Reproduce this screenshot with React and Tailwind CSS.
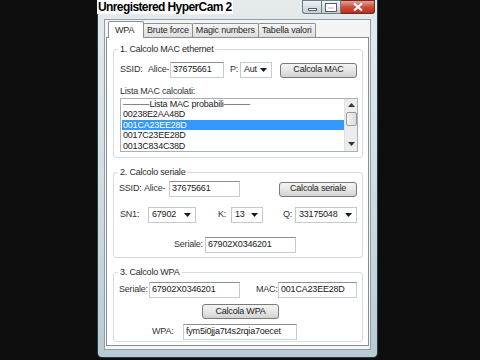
import React from "react";

const TextBox = ({ w, children }) => (
    <div
        className={`${w} h-[16px] bg-white border border-[#c5cdd4] border-t-[#8d9197] flex items-center px-[2px] text-[#202020] whitespace-nowrap overflow-hidden`}
    >
        {children}
    </div>
);

const Combo = ({ w, children }) => (
    <div
        className={`${w} h-[16px] bg-white border border-[#c2c9d0] flex items-center pl-[3px] pr-[4px] text-[#202020] whitespace-nowrap overflow-hidden`}
    >
        <span className="flex-1">{children}</span>
        <svg width="7" height="4" viewBox="0 0 7 4" className="shrink-0 ml-[2px]">
            <path d="M0 0 L7 0 L3.5 4 Z" fill="#1a1a1a" />
        </svg>
    </div>
);

const Button = ({ w, children }) => (
    <div
        className={`${w} h-[15px] rounded-[3px] border border-[#7a7a7a] bg-gradient-to-b from-[#f4f4f4] via-[#e6e6e6] to-[#d2d2d2] flex items-center justify-center text-[#1c1c1c] whitespace-nowrap`}
    >
        {children}
    </div>
);

const Group = ({ title, className, children }) => (
    <fieldset className={`border border-[#d5dde3] rounded-[3px] mx-0 ${className}`}>
        <legend className="ml-[4px] px-[2px] leading-[10px] text-[#2a2a2a]">{title}</legend>
        {children}
    </fieldset>
);

const Tab = ({ label, active }) =>
    active ? (
        <div className="w-[36px] h-[17px] -mb-px bg-white border border-b-0 border-[#8c8e94] rounded-t-[2px] pl-[6px] pt-[2px] text-[#2a2a2a] relative z-10">
            {label}
        </div>
    ) : (
        <div className="h-[14px] -ml-px first:ml-0 border border-b-0 border-[#8e9096] rounded-t-[2px] bg-gradient-to-b from-[#f5f5f5] to-[#dedede] px-[3px] leading-[13px] text-[#2a2a2a] whitespace-nowrap">
            {label}
        </div>
    );

const macs = [
    "———Lista MAC probabili———",
    "00238E2AA48D",
    "001CA23EE28D",
    "0017C23EE28D",
    "0013C834C38D",
];

export default function App() {
    return (
        <div
            className="w-[480px] h-[360px] bg-[#0e0e0e] flex overflow-hidden text-[9px] tracking-[-0.2px]"
            style={{ fontFamily: '"Liberation Sans", Arial, sans-serif' }}
        >
            <div className="ml-[97px] w-[281px] h-[358px] flex flex-col border border-t-0 border-[#1f3f49] rounded-b-[5px] bg-gradient-to-b from-[#e6eaed] via-[#d3dde2] to-[#b9cbd2]">
                {/* title bar */}
                <div className="h-[19px] flex items-start justify-between shrink-0">
                    <div className="-ml-px bg-white px-[1px] h-[14px] leading-[14px] text-[12px] font-bold text-black whitespace-nowrap tracking-[-0.6px]">
                        Unregistered HyperCam 2
                    </div>
                    <div className="flex mr-[2px]">
                        <div className="w-[19px] h-[14px] border border-[#6d7d86] border-r-0 rounded-bl-[3px] bg-gradient-to-b from-[#f0f3f5] to-[#c3ced4] flex items-center justify-center">
                            <div className="w-[9px] h-[3px] mt-[5px] bg-white border border-[#55606a]" />
                        </div>
                        <div className="w-[20px] h-[14px] border border-[#6d7d86] bg-gradient-to-b from-[#f0f3f5] to-[#c3ced4] flex items-center justify-center">
                            <div className="w-[10px] h-[7px] border-[2px] border-t-[3px] border-[#ffffff] outline outline-1 outline-[#55606a]" />
                        </div>
                        <div className="w-[34px] h-[14px] border border-[#6b2a22] border-l-0 rounded-br-[3px] bg-gradient-to-b from-[#e3a196] via-[#cc4b3a] to-[#b8301e] flex items-center justify-center">
                            <svg width="10" height="8" viewBox="0 0 10 8">
                                <path d="M1 0.5 L9 7.5 M9 0.5 L1 7.5" stroke="#ffffff" strokeWidth="2.2" />
                            </svg>
                        </div>
                    </div>
                </div>

                {/* client */}
                <div className="mx-[6px] mb-[7px] flex-1 bg-[#f4f4f4] border border-[#8aa0aa] flex flex-col pt-[1px] pl-[1px] pr-[1px] pb-[3px]">
                    <div className="flex items-end h-[16px] pl-[2px] shrink-0">
                        <Tab label="WPA" active />
                        <div className="flex items-end -ml-px">
                            <Tab label="Brute force" />
                            <Tab label="Magic numbers" />
                            <Tab label="Tabella valori" />
                        </div>
                    </div>
                    <div className="flex-1 bg-white border border-[#898c95] pl-[6px] pr-[5px] pt-[6px] flex flex-col">
                        <Group title="1. Calcolo MAC ethernet" className="h-[114px] pb-[3px]">
                            <div className="flex items-center mt-[8px] pl-[6px] text-[#333]">
                                <span className="w-[28px]">SSID:</span>
                                <span className="w-[22px]">Alice-</span>
                                <TextBox w="w-[54px]">37675661</TextBox>
                                <span className="ml-[6px] w-[10px]">P:</span>
                                <Combo w="w-[32px]">Aut</Combo>
                                <div className="ml-[8px]">
                                    <Button w="w-[77px]">Calcola MAC</Button>
                                </div>
                            </div>
                            <div className="mt-[8px] pl-[6px] leading-[10px] text-[#333]">Lista MAC calcolati:</div>
                            <div className="mt-[2px] ml-[6px] w-[238px] h-[54px] border border-[#a9b0b7] bg-white flex">
                                <div className="flex-1 pl-[1px] text-[#222]">
                                    {macs.map((m, i) => (
                                        <div
                                            key={m}
                                            className={`h-[10.4px] leading-[10.4px] pl-[1px] whitespace-nowrap ${i === 2 ? "bg-[#3399ff] text-white" : ""}`}
                                        >
                                            {m}
                                        </div>
                                    ))}
                                </div>
                                <div className="w-[13px] bg-[#ececec] border-l border-[#e0e0e0] flex flex-col items-center">
                                    <svg width="7" height="4" viewBox="0 0 7 4" className="mt-[4px]">
                                        <path d="M0 4 L7 4 L3.5 0 Z" fill="#333" />
                                    </svg>
                                    <div className="mt-[5px] w-[11px] h-[14px] rounded-[2px] border border-[#9a9a9a] bg-gradient-to-r from-[#f2f2f2] to-[#dcdcdc]" />
                                    <div className="flex-1" />
                                    <svg width="7" height="4" viewBox="0 0 7 4" className="mb-[5px]">
                                        <path d="M0 0 L7 0 L3.5 4 Z" fill="#333" />
                                    </svg>
                                </div>
                            </div>
                        </Group>

                        <Group title="2. Calcolo seriale" className="mt-[9px] h-[91px]">
                            <div className="flex items-center mt-[4px] pl-[5px] text-[#333]">
                                <span className="w-[25px]">SSID:</span>
                                <span className="w-[25px]">Alice-</span>
                                <TextBox w="w-[71px]">37675661</TextBox>
                                <div className="ml-[39px]">
                                    <Button w="w-[78px]">Calcola seriale</Button>
                                </div>
                            </div>
                            <div className="flex items-center mt-[10px] pl-[6px] text-[#333]">
                                <span className="w-[28px]">SN1:</span>
                                <Combo w="w-[48px]">67902</Combo>
                                <span className="ml-[22px] w-[13px]">K:</span>
                                <Combo w="w-[32px]">13</Combo>
                                <span className="ml-[20px] w-[12px]">Q:</span>
                                <Combo w="w-[62px]">33175048</Combo>
                            </div>
                            <div className="flex items-center mt-[14px] pl-[60px] text-[#333]">
                                <span className="w-[31px]">Seriale:</span>
                                <TextBox w="w-[91px]">67902X0346201</TextBox>
                            </div>
                        </Group>

                        <Group title="3. Calcolo WPA" className="mt-[9px] h-[75px]">
                            <div className="flex items-center mt-[5px] pl-[5px] text-[#333]">
                                <span className="w-[30px]">Seriale:</span>
                                <TextBox w="w-[91px]">67902X0346201</TextBox>
                                <span className="ml-[16px] w-[22px]">MAC:</span>
                                <TextBox w="w-[79px]">001CA23EE28D</TextBox>
                            </div>
                            <div className="mt-[6px] ml-[88px]">
                                <Button w="w-[77px]">Calcola WPA</Button>
                            </div>
                            <div className="flex items-center mt-[5px] pl-[38px] text-[#333]">
                                <span className="w-[31px]">WPA:</span>
                                <TextBox w="w-[114px]">fym5i0jja7t4s2rqia7oecet</TextBox>
                            </div>
                        </Group>
                    </div>
                </div>
            </div>
        </div>
    );
}
